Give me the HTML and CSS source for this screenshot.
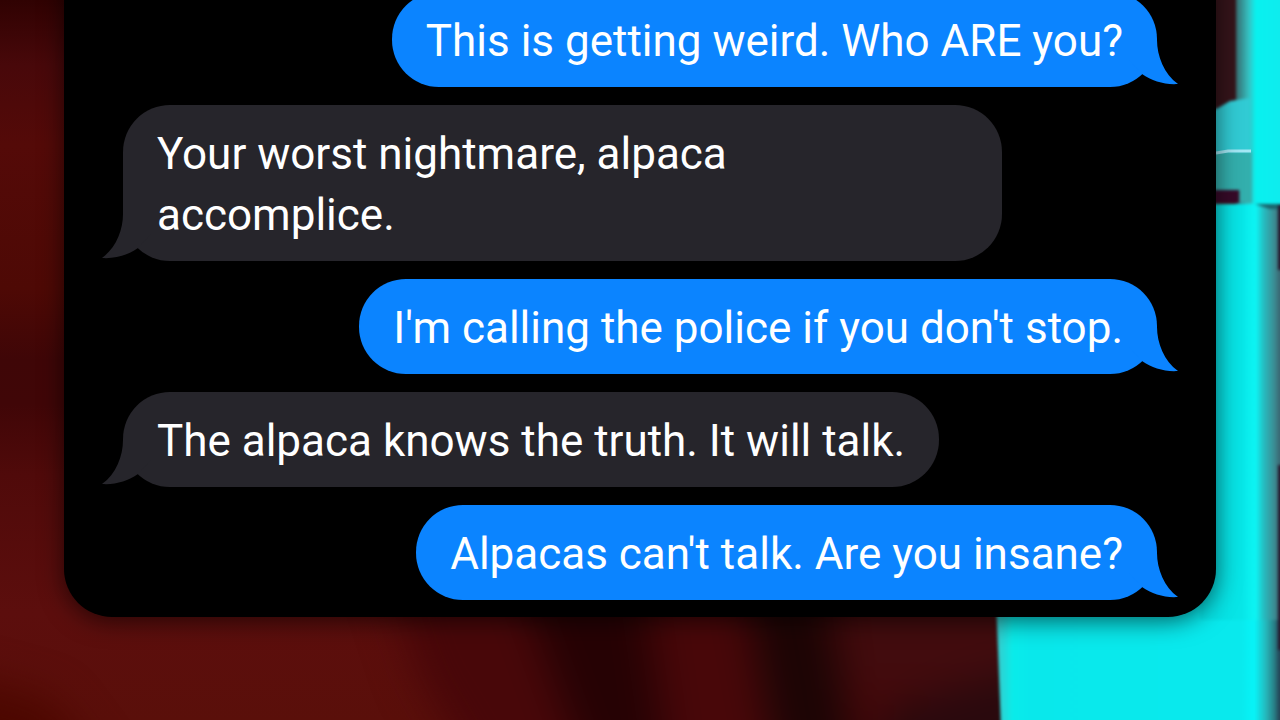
FILE: index.html
```html
<!DOCTYPE html>
<html lang="en">
<head>
    <meta charset="UTF-8">
    <meta name="viewport" content="width=device-width, initial-scale=1.0">
    <title>Messages</title>
    <link rel="stylesheet" href="styles.css">
</head>
<body>
    <svg class="backdrop" viewBox="0 0 1280 720" preserveAspectRatio="none" aria-hidden="true">
        <defs>
            <filter id="soft" x="-50%" y="-50%" width="200%" height="200%" color-interpolation-filters="sRGB"><feGaussianBlur stdDeviation="20"/></filter>
            <filter id="edge" x="-20%" y="-20%" width="140%" height="140%" color-interpolation-filters="sRGB"><feGaussianBlur stdDeviation="1.5"/></filter>
            <linearGradient id="wall" x1="0" y1="0" x2="0" y2="1">
                <stop offset="0" stop-color="#300202"/>
                <stop offset="0.09" stop-color="#48080a"/>
                <stop offset="0.2" stop-color="#540a08"/>
                <stop offset="0.4" stop-color="#4e0905"/>
                <stop offset="0.5" stop-color="#3f0607"/>
                <stop offset="0.56" stop-color="#400607"/>
                <stop offset="0.66" stop-color="#500a0a"/>
                <stop offset="0.85" stop-color="#5c0e0d"/>
                <stop offset="1" stop-color="#5a0f0a"/>
            </linearGradient>
            <linearGradient id="strip" gradientUnits="userSpaceOnUse" x1="1216" y1="0" x2="1280" y2="0">
                <stop offset="0" stop-color="#07dfe2"/>
                <stop offset="0.4" stop-color="#07e6e7"/>
                <stop offset="0.62" stop-color="#0cf5f4"/>
                <stop offset="0.74" stop-color="#25bec2"/>
                <stop offset="0.92" stop-color="#3c8990"/>
                <stop offset="1" stop-color="#3a6570"/>
            </linearGradient>
            <linearGradient id="floor" gradientUnits="userSpaceOnUse" x1="996" y1="0" x2="1280" y2="0">
                <stop offset="0" stop-color="#3bc8ca"/>
                <stop offset="0.06" stop-color="#09ecea"/>
                <stop offset="0.12" stop-color="#09e8eb"/>
                <stop offset="0.86" stop-color="#09e9ed"/>
                <stop offset="0.91" stop-color="#07f4f8"/>
                <stop offset="0.95" stop-color="#25b8bc"/>
                <stop offset="0.98" stop-color="#287f86"/>
                <stop offset="1" stop-color="#243f52"/>
            </linearGradient>
            <linearGradient id="column" gradientUnits="userSpaceOnUse" x1="1236" y1="0" x2="1280" y2="0">
                <stop offset="0" stop-color="#376d70"/>
                <stop offset="0.3" stop-color="#35c3c4"/>
                <stop offset="0.45" stop-color="#08f1ef"/>
                <stop offset="1" stop-color="#0eecee"/>
            </linearGradient>
        </defs>
        <rect width="1280" height="720" fill="url(#wall)"/>
        <g filter="url(#soft)">
            <path d="M-60 670 L50 700 L110 780 L-60 780Z" fill="#4c0700"/>
            <path d="M380 560 L1060 560 L1060 780 L480 780 L420 680Z" fill="#480709"/>
            <path d="M510 560 L640 560 L670 780 L590 780Z" fill="#260204"/>
            <path d="M740 560 L820 560 L860 780 L780 780Z" fill="#1c0505"/>
            <path d="M840 560 L1060 560 L1060 680 L850 690Z" fill="#420c0e"/>
            <path d="M880 710 L1060 660 L1060 780 L880 780Z" fill="#29090d"/>
        </g>
        <g filter="url(#edge)">
            <path d="M996 600 H1290 V730 H1001Z" fill="url(#floor)"/>
            <rect x="1200" y="-10" width="38" height="122" fill="#35141a"/>
            <rect x="1236" y="-10" width="54" height="214" fill="url(#column)"/>
            <path d="M1200 115 L1218 108 L1230 101 L1250 98 V152 H1200Z" fill="#31cbd4"/>
            <path d="M1200 152 H1252 V203 L1240 202 V190 H1200Z" fill="#33afad"/>
            <path d="M1200 190 H1239 V203 H1200Z" fill="#370a29"/>
            <path d="M1200 204 H1290 V620 H1200Z" fill="url(#strip)"/>
            <path d="M1255 204 H1290 V209 H1270Z" fill="#19646b"/>
            <path d="M1278 205 H1290 V270 H1278Z M1278 465 H1290 V650 H1278Z" fill="#26172c"/>
        </g>
        <path d="M1216 153 L1228 151 H1251" stroke="#a4e8f5" stroke-width="3" fill="none"/>
    </svg>

    <main class="screen">
        <section class="chat" aria-label="Conversation">
            <p class="bubble sent">This is getting weird. Who ARE you?</p>
            <p class="bubble received">Your worst nightmare, alpaca accomplice.</p>
            <p class="bubble sent">I'm calling the police if you don't stop.</p>
            <p class="bubble received">The alpaca knows the truth. It will talk.</p>
            <p class="bubble sent">Alpacas can't talk. Are you insane?</p>
        </section>
    </main>
</body>
</html>
```
FILE: styles.css
```css
:root {
    --sent: #0b84ff;
    --received: #26252b;
}
* {
    box-sizing: border-box;
}
body {
    margin: 0;
    background-color: #4e0808;
    font-family: Roboto, "Liberation Sans", Arial, sans-serif;
    color: #fff;
}
.backdrop {
    position: fixed;
    inset: 0;
    width: 100%;
    height: 100%;
    z-index: -1;
}
/* newest message stays at the bottom, older ones run off the top */
.screen {
    display: flex;
    flex-direction: column;
    justify-content: flex-end;
    height: 100vh;
    padding: 0 5% 103px;
    overflow: hidden;
}
.chat {
    display: flex;
    flex-direction: column;
    flex-shrink: 0;
    gap: 18px;
    padding: 18px 59px 17px;
    background-color: #000;
    border-radius: 0 0 48px 48px;
    box-shadow: 0 4px 24px rgba(0, 0, 0, 0.6);
}
.bubble {
    position: relative;
    max-width: 85%;
    margin: 0;
    padding: 19px 34px 15px;
    border-radius: 47px;
    font-size: 44px;
    line-height: 61px;
}
.sent {
    align-self: flex-end;
    background-color: var(--sent);
}
.received {
    align-self: flex-start;
    background-color: var(--received);
}
/* tail */
.bubble::after {
    content: "";
    position: absolute;
    right: -22px;
    bottom: 0;
    width: 50px;
    height: 47px;
    background-color: inherit;
    clip-path: path("M28 0 C28 16 35 34 49 44 C36 45 23 41 13 34 L0 20 L0 0 Z");
}
.received::after {
    right: auto;
    left: -22px;
    transform: scaleX(-1);
}
```
